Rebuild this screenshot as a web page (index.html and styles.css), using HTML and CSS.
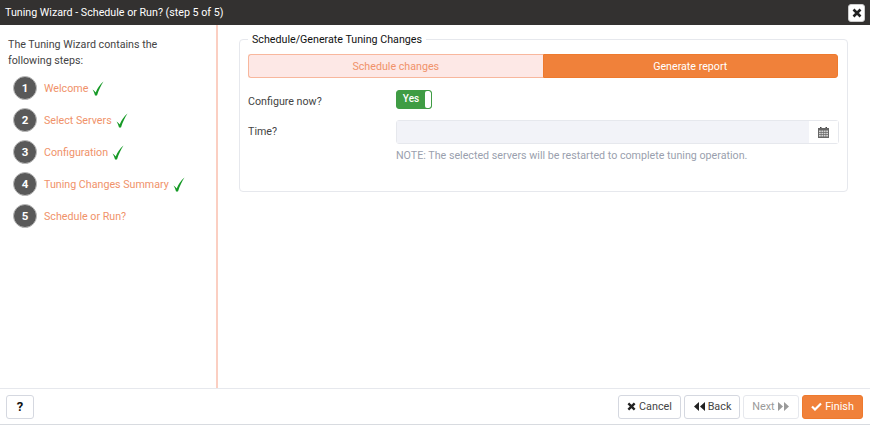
FILE: index.html
```html
<!DOCTYPE html>
<html lang="en">
<head>
    <meta charset="UTF-8">
    <title>Tuning Wizard</title>
    <link rel="stylesheet" href="styles.css">
</head>
<body>
    <svg class="defs" width="0" height="0">
        <symbol id="tick" viewBox="0 0 12 15">
            <path d="M.5 8.500C2 9.300 3 10.500 3.700 11.500C5.500 7 8 3.500 11.500 .5C9 4.500 6.700 9 5 14.500H3C2.500 12.500 1.800 10.500 .5 8.500z" fill="#169a26"/>
        </symbol>
    </svg>
    <div class="dialog">
        <div class="title-bar">
            <span>Tuning Wizard - Schedule or Run? (step 5 of 5)</span>
            <button class="close-btn">
                <svg width="10" height="10" viewBox="0 0 10 10"><path d="M1.500 1.500l7 7M8.500 1.500l-7 7" stroke="#222" stroke-width="2.600" fill="none"/></svg>
            </button>
        </div>

        <div class="main">
            <div class="sidebar">
                <p class="intro">The Tuning Wizard contains the following steps:</p>
                <ul class="steps">
                    <li><span class="num">1</span><span class="step-name">Welcome</span><svg class="tick"><use href="#tick"/></svg></li>
                    <li><span class="num">2</span><span class="step-name">Select Servers</span><svg class="tick"><use href="#tick"/></svg></li>
                    <li><span class="num">3</span><span class="step-name">Configuration</span><svg class="tick"><use href="#tick"/></svg></li>
                    <li><span class="num">4</span><span class="step-name">Tuning Changes Summary</span><svg class="tick"><use href="#tick"/></svg></li>
                    <li><span class="num">5</span><span class="step-name">Schedule or Run?</span></li>
                </ul>
            </div>

            <div class="content">
                <fieldset class="group">
                    <legend>Schedule/Generate Tuning Changes</legend>
                    <div class="tabs">
                        <div class="tab">Schedule changes</div>
                        <div class="tab active">Generate report</div>
                    </div>
                    <div class="row switch-row">
                        <label>Configure now?</label>
                        <div class="switch"><span class="switch-on">Yes</span><span class="switch-handle"></span></div>
                    </div>
                    <div class="row time-row">
                        <label>Time?</label>
                        <div class="field">
                            <div class="input-group">
                                <div class="input"></div>
                                <div class="addon">
                                    <svg width="11" height="11" viewBox="0 0 11 11"><path d="M2 0h1.500v2H2zM7.500 0H9v2H7.500z" fill="#444"/><path d="M0 1h11v10H0z" fill="#666"/><path d="M1 3.500h1.800v1.600H1zM3.400 3.500h1.800v1.600H3.400zM5.800 3.500h1.800v1.600H5.800zM8.200 3.500H10v1.600H8.200zM1 5.700h1.800v1.600H1zM3.400 5.700h1.800v1.600H3.400zM5.800 5.700h1.800v1.600H5.800zM8.200 5.700H10v1.600H8.200zM1 7.900h1.800v1.600H1zM3.400 7.900h1.800v1.600H3.400zM5.800 7.900h1.800v1.600H5.800zM8.200 7.900H10v1.600H8.200z" fill="#d4d4d4"/></svg>
                                </div>
                            </div>
                            <p class="note">NOTE: The selected servers will be restarted to complete tuning operation.</p>
                        </div>
                    </div>
                </fieldset>
            </div>
        </div>

        <div class="footer">
            <button class="btn help-btn">?</button>
            <div class="actions">
                <button class="btn"><svg width="9" height="9" viewBox="0 0 10 10"><path d="M1.500 1.500l7 7M8.500 1.500l-7 7" stroke="#222" stroke-width="2.600" fill="none"/></svg>Cancel</button>
                <button class="btn"><svg width="12" height="9" viewBox="0 0 12 9"><path d="M6 0v9L1 4.500zM12 0v9L7 4.500z" fill="#222"/></svg>Back</button>
                <button class="btn disabled">Next<svg width="12" height="9" viewBox="0 0 12 9"><path d="M0 0v9l5-4.500zM6 0v9l5-4.500z" fill="#9a9a9a"/></svg></button>
                <button class="btn primary"><svg width="11" height="9" viewBox="0 0 11 9"><path d="M1 4.500l3 3 6-6" stroke="#fff" stroke-width="2.200" fill="none"/></svg>Finish</button>
            </div>
        </div>
    </div>
</body>
</html>
```

FILE: styles.css
```css
* {
    box-sizing: border-box;
}

html, body {
    margin: 0;
    height: 100%;
}

body {
    font-family: Roboto, "Liberation Sans", sans-serif;
    font-size: 10.7px;
    color: #444;
    background: #fff;
}

.defs {
    display: block;
    height: 0;
}

.dialog {
    display: flex;
    flex-direction: column;
    width: 870px;
    height: 425px;
    border-bottom: 1px solid #d8dbe0;
}

.title-bar {
    display: flex;
    align-items: center;
    justify-content: space-between;
    height: 25px;
    padding: 0 5px 0 5px;
    background: #333130;
    color: #fff;
    font-size: 10.7px;
}

.close-btn {
    display: flex;
    align-items: center;
    justify-content: center;
    width: 17px;
    height: 18px;
    padding: 0;
    background: #fff;
    border: 1px solid #ccc;
    border-radius: 3px;
}

.main {
    display: flex;
    flex: 1;
    min-height: 0;
}

.sidebar {
    width: 218px;
    padding: 12px 8px 0;
    border-right: 2px solid #fbcfc2;
}

.intro {
    max-width: 170px;
    margin: 0 0 3px;
    line-height: 16px;
    color: #444;
}

.steps {
    margin: 0;
    padding: 0;
    list-style: none;
}

.steps li {
    display: flex;
    align-items: center;
    height: 32px;
    padding-left: 6px;
}

.num {
    display: flex;
    align-items: center;
    justify-content: center;
    width: 24px;
    height: 24px;
    margin-left: -1px;
    margin-right: 7px;
    border-radius: 50%;
    background: #595959;
    border: 1px solid #bbb;
    color: #fff;
    font-size: 11.500px;
    font-weight: bold;
}

.step-name {
    color: #f0926a;
}

.tick {
    width: 12px;
    height: 15px;
    margin-left: 4px;
}

.content {
    flex: 1;
    padding: 8px 22px 0 21px;
}

.group {
    height: 159px;
    margin: 0;
    padding: 8px 9px 0 8px;
    border: 1px solid #e6e8ed;
    border-radius: 4px;
}

.group legend {
    margin-left: 0;
    padding: 0 4px;
    color: #111;
    line-height: 13px;
}

.tabs {
    display: flex;
    height: 24px;
    border-radius: 3px;
}

.tab {
    display: flex;
    flex: 1;
    align-items: center;
    justify-content: center;
    background: #fde8e6;
    border: 1px solid #f8b79d;
    border-right: 0;
    border-radius: 3px 0 0 3px;
    color: #f0926a;
}

.tab.active {
    background: #f0813a;
    border: 1px solid #ee7a2e;
    border-radius: 0 3px 3px 0;
    color: #fff;
}

.row {
    display: flex;
}

.row label {
    width: 148px;
    color: #444;
}

.switch-row {
    align-items: center;
    margin-top: 12px;
    height: 19px;
}

.switch-row label {
    padding-top: 4px;
}

.switch {
    display: flex;
    width: 36px;
    height: 19px;
    background: #3f9c44;
    border: 1px solid #3f9c44;
    border-radius: 3px;
    overflow: hidden;
}

.switch-on {
    flex: 1;
    color: #fff;
    font-size: 10px;
    font-weight: 500;
    line-height: 16px;
    text-align: center;
}

.switch-handle {
    width: 6px;
    background: #fff;
    border-radius: 2px;
}

.time-row {
    margin-top: 11px;
}

.time-row label {
    padding-top: 5px;
}

.field {
    flex: 1;
}

.input-group {
    display: flex;
    height: 24px;
    border: 1px solid #e6e8ed;
    border-radius: 3px;
    margin-right: -1px;
}

.input {
    flex: 1;
    background: #f2f3f8;
}

.addon {
    display: flex;
    align-items: center;
    justify-content: center;
    width: 29px;
    background: #fff;
}

.note {
    margin: 5px 0 0;
    color: #9a9fae;
    line-height: 14px;
}

.footer {
    display: flex;
    align-items: center;
    justify-content: space-between;
    height: 36px;
    padding: 0 7px 0 6px;
    border-top: 1px solid #e6e8ed;
}

.actions {
    display: flex;
    gap: 3px;
}

.btn {
    display: flex;
    align-items: center;
    justify-content: center;
    gap: 3px;
    width: 63px;
    height: 24px;
    padding: 0;
    background: #fff;
    border: 1px solid #d5d8e0;
    border-radius: 3px;
    color: #444;
    font-family: inherit;
    font-size: 10.800px;
}

.actions .btn:nth-child(2),
.actions .btn.disabled {
    width: 56px;
}

.actions .btn.disabled {
    border-color: #e6e8ed;
    color: #9a9a9a;
}

.actions .btn.primary {
    width: 61px;
    background: #f0813a;
    border-color: #ee7a2e;
    color: #fff;
}

.help-btn {
    width: 28px;
    color: #111;
    font-size: 13px;
    font-weight: bold;
}
```
